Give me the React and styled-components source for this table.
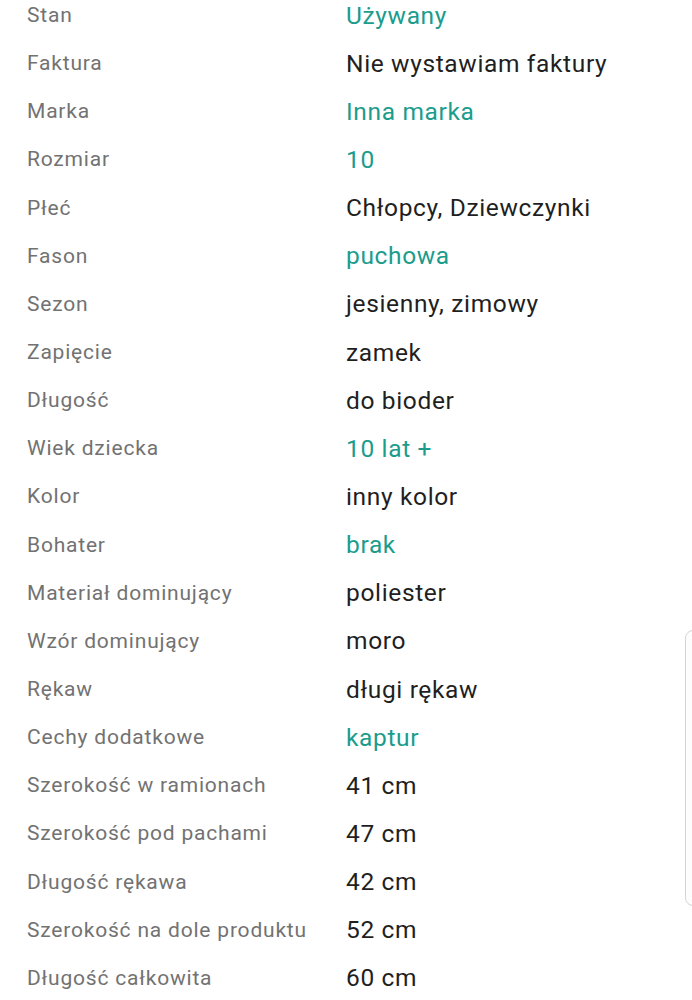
import React from 'react';
import styled, { createGlobalStyle } from 'styled-components';

const GlobalStyle = createGlobalStyle`
    html, body {
        margin: 0;
        padding: 0;
        background: #ffffff;
        font-family: Roboto, "Noto Sans", sans-serif;
        overflow: hidden;
    }
`

const Page = styled.div`
    position: relative;
    width: 692px;
    height: 1000px;
    overflow: hidden;
    background: #fff;
`

const List = styled.dl`
    margin: -9px 0 0 0;
    padding: 0 0 0 27px;
`

const Row = styled.div`
    display: grid;
    grid-template-columns: 319px 1fr;
    align-items: center;
    height: 48.15px;
`

const Label = styled.dt`
    margin: 0;
    font-size: 21px;
    letter-spacing: 0.8px;
    color: #727272;
    white-space: nowrap;
`

const Value = styled.dd`
    margin: 0;
    font-size: 24.5px;
    letter-spacing: 0.65px;
    color: ${p => (p.$link ? '#1b9c8c' : '#1f1f1f')};
    white-space: nowrap;
`

const ScrollHandle = styled.div`
    position: absolute;
    left: 685px;
    top: 630px;
    width: 20px;
    height: 274px;
    border: 1px solid #d4d4d4;
    border-radius: 8px;
    background: #fdfdfd;
`

const params = [
    ['Stan', 'Używany', true],
    ['Faktura', 'Nie wystawiam faktury'],
    ['Marka', 'Inna marka', true],
    ['Rozmiar', '10', true],
    ['Płeć', 'Chłopcy, Dziewczynki'],
    ['Fason', 'puchowa', true],
    ['Sezon', 'jesienny, zimowy'],
    ['Zapięcie', 'zamek'],
    ['Długość', 'do bioder'],
    ['Wiek dziecka', '10 lat +', true],
    ['Kolor', 'inny kolor'],
    ['Bohater', 'brak', true],
    ['Materiał dominujący', 'poliester'],
    ['Wzór dominujący', 'moro'],
    ['Rękaw', 'długi rękaw'],
    ['Cechy dodatkowe', 'kaptur', true],
    ['Szerokość w ramionach', '41 cm'],
    ['Szerokość pod pachami', '47 cm'],
    ['Długość rękawa', '42 cm'],
    ['Szerokość na dole produktu', '52 cm'],
    ['Długość całkowita', '60 cm'],
]

export default () => (
    <Page>
        <GlobalStyle />
        <List>
            {params.map(([label, value, link]) => (
                <Row key={label}>
                    <Label>{label}</Label>
                    <Value $link={link}>{value}</Value>
                </Row>
            ))}
        </List>
        <ScrollHandle />
    </Page>
)
